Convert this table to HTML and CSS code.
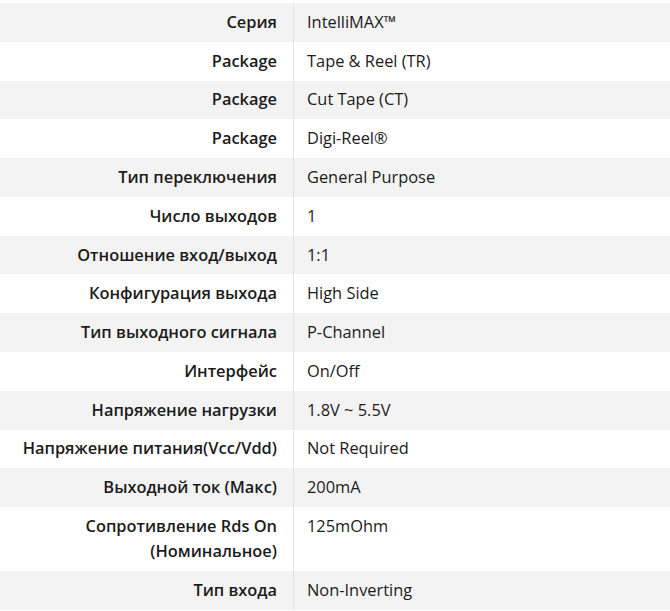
FILE: index.html
```html
<!DOCTYPE html>
<html lang="ru">
<head>
<meta charset="utf-8">
<link rel="stylesheet" href="styles.css">
</head>
<body>
<table class="specs">
  <tbody>
    <tr><th>Серия</th><td>IntelliMAX™</td></tr>
    <tr><th>Package</th><td>Tape &amp; Reel (TR)</td></tr>
    <tr><th>Package</th><td>Cut Tape (CT)</td></tr>
    <tr><th>Package</th><td>Digi-Reel®</td></tr>
    <tr><th>Тип переключения</th><td>General Purpose</td></tr>
    <tr><th>Число выходов</th><td>1</td></tr>
    <tr><th>Отношение вход/выход</th><td>1:1</td></tr>
    <tr><th>Конфигурация выхода</th><td>High Side</td></tr>
    <tr><th>Тип выходного сигнала</th><td>P-Channel</td></tr>
    <tr><th>Интерфейс</th><td>On/Off</td></tr>
    <tr><th>Напряжение нагрузки</th><td>1.8V ~ 5.5V</td></tr>
    <tr><th>Напряжение питания(Vcc/Vdd)</th><td>Not Required</td></tr>
    <tr><th>Выходной ток (Макс)</th><td>200mA</td></tr>
    <tr><th>Сопротивление Rds On<br>(Номинальное)</th><td>125mOhm</td></tr>
    <tr><th>Тип входа</th><td>Non-Inverting</td></tr>
  </tbody>
</table>
</body>
</html>
```
FILE: styles.css
```css
html, body {
  margin: 0;
  padding: 0;
  background: #ffffff;
}
body {
  padding-top: 3px;
  font-family: "Open Sans", "Noto Sans", sans-serif;
  font-size: 16.4px;
  color: #1b1b1b;
}
.specs {
  width: 670px;
  border-collapse: collapse;
  table-layout: fixed;
}
.specs tr:nth-child(odd) {
  background: #f3f3f3;
}
.specs th,
.specs td {
  line-height: 25px;
  padding: 5.9px 0 7.9px;
  vertical-align: top;
}
.specs th {
  width: 277px;
  padding-right: 16px;
  text-align: right;
  font-weight: 600;
  border-right: 1px solid #e2e2e2;
}
.specs td {
  padding-left: 13px;
  text-align: left;
  font-weight: 400;
}
```
